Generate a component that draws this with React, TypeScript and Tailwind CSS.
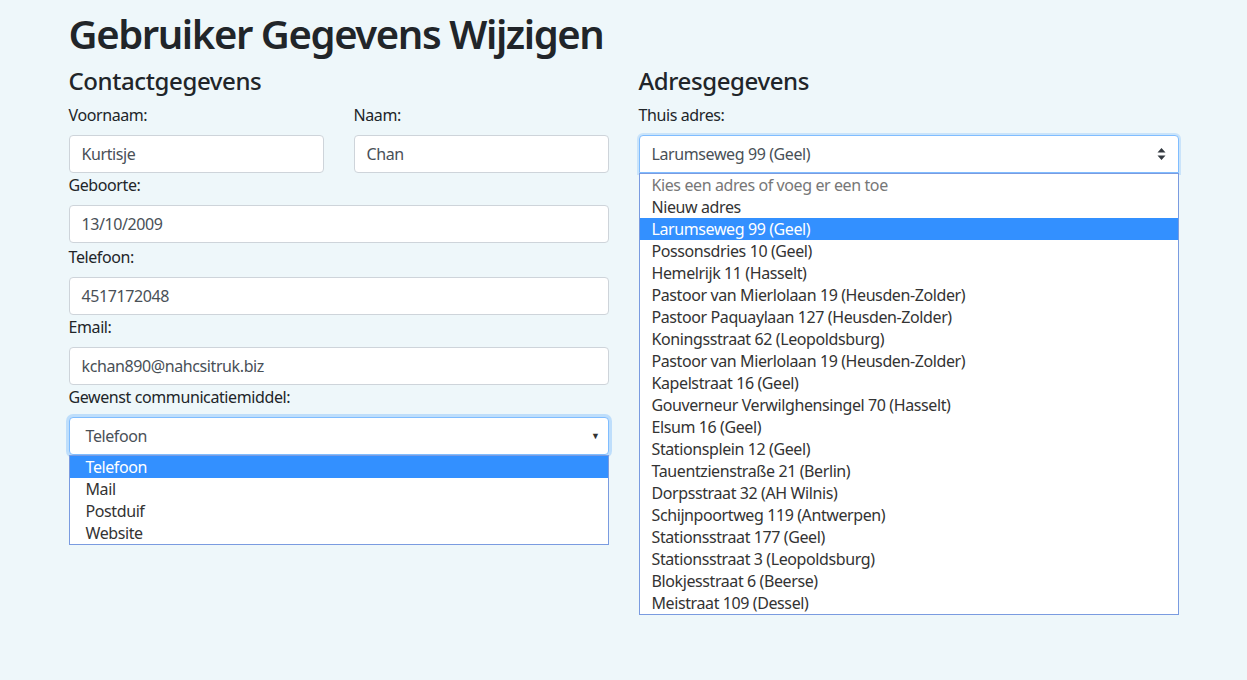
const font = "font-['Segoe_UI','Noto_Sans',sans-serif] tracking-[-0.025em]";

const adressen = [
  "Nieuw adres",
  "Larumseweg 99 (Geel)",
  "Possonsdries 10 (Geel)",
  "Hemelrijk 11 (Hasselt)",
  "Pastoor van Mierlolaan 19 (Heusden-Zolder)",
  "Pastoor Paquaylaan 127 (Heusden-Zolder)",
  "Koningsstraat 62 (Leopoldsburg)",
  "Pastoor van Mierlolaan 19 (Heusden-Zolder)",
  "Kapelstraat 16 (Geel)",
  "Gouverneur Verwilghensingel 70 (Hasselt)",
  "Elsum 16 (Geel)",
  "Stationsplein 12 (Geel)",
  "Tauentzienstraße 21 (Berlin)",
  "Dorpsstraat 32 (AH Wilnis)",
  "Schijnpoortweg 119 (Antwerpen)",
  "Stationsstraat 177 (Geel)",
  "Stationsstraat 3 (Leopoldsburg)",
  "Blokjesstraat 6 (Beerse)",
  "Meistraat 109 (Dessel)",
];

const middelen = ["Telefoon", "Mail", "Postduif", "Website"];

function Label({ children }: { children: React.ReactNode }) {
  return <label className="mb-2 block text-base leading-6">{children}</label>;
}

function Field({ value }: { value: string }) {
  return (
    <div className="flex h-[38px] items-center rounded border border-[#ced4da] bg-white px-3 text-base text-[#495057]">
      {value}
    </div>
  );
}

export default function App() {
  return (
    <div className={`min-h-[680px] w-full bg-[#eef7fa] text-[#212529] ${font}`}>
      <div className="mx-auto w-[1110px] pt-[10px]">
        <h1 className="mb-2 text-[40px] font-semibold leading-[48px] tracking-[-0.035em]">
          Gebruiker Gegevens Wijzigen
        </h1>
        <div className="grid grid-cols-2 gap-[30px]">
          {/* contactgegevens */}
          <div>
            <h4 className="mb-2 text-2xl font-medium leading-[29px]">Contactgegevens</h4>
            <div className="grid grid-cols-2 gap-[30px]">
              <div>
                <Label>Voornaam:</Label>
                <Field value="Kurtisje" />
              </div>
              <div>
                <Label>Naam:</Label>
                <Field value="Chan" />
              </div>
            </div>
            <Label>Geboorte:</Label>
            <Field value="13/10/2009" />
            <div className="mt-0.5">
              <Label>Telefoon:</Label>
              <Field value="4517172048" />
            </div>
            <Label>Email:</Label>
            <Field value="kchan890@nahcsitruk.biz" />
            <Label>Gewenst communicatiemiddel:</Label>
            <div className="flex h-[38px] items-center justify-between rounded border border-[#80bdff] bg-white pl-4 pr-2 text-base text-[#495057] shadow-[0_0_0_3px_rgba(0,123,255,0.2)]">
              <span>Telefoon</span>
              <span className="text-[9px] text-[#333]">▼</span>
            </div>
            <div className="border border-[#7a9be0] bg-white text-base leading-[22px] text-[#333]">
              {middelen.map((m, i) => (
                <div
                  key={m}
                  className={`pl-4 ${i === 0 ? "bg-[#3390ff] text-white" : ""}`}
                >
                  {m}
                </div>
              ))}
            </div>
          </div>

          {/* adresgegevens */}
          <div>
            <h4 className="mb-2 text-2xl font-medium leading-[29px]">Adresgegevens</h4>
            <Label>Thuis adres:</Label>
            <div className="flex h-[38px] items-center justify-between rounded-t border border-[#80bdff] bg-white pl-3 pr-3 text-base text-[#495057] shadow-[0_0_0_2px_rgba(0,123,255,0.15)]">
              <span>Larumseweg 99 (Geel)</span>
              <svg width="9" height="12" viewBox="0 0 9 12" className="fill-[#343a40]">
                <path d="M4.5 0 L8.5 4.5 H0.5 Z M4.5 12 L0.5 7.5 H8.5 Z" />
              </svg>
            </div>
            <div className="border border-[#7a9be0] bg-white text-base leading-[22px] text-[#333]">
              <div className="pl-3 text-[#777]">Kies een adres of voeg er een toe</div>
              {adressen.map((a, i) => (
                <div
                  key={i}
                  className={`pl-3 ${i === 1 ? "bg-[#3390ff] text-white" : ""}`}
                >
                  {a}
                </div>
              ))}
            </div>
          </div>
        </div>
      </div>
    </div>
  );
}
